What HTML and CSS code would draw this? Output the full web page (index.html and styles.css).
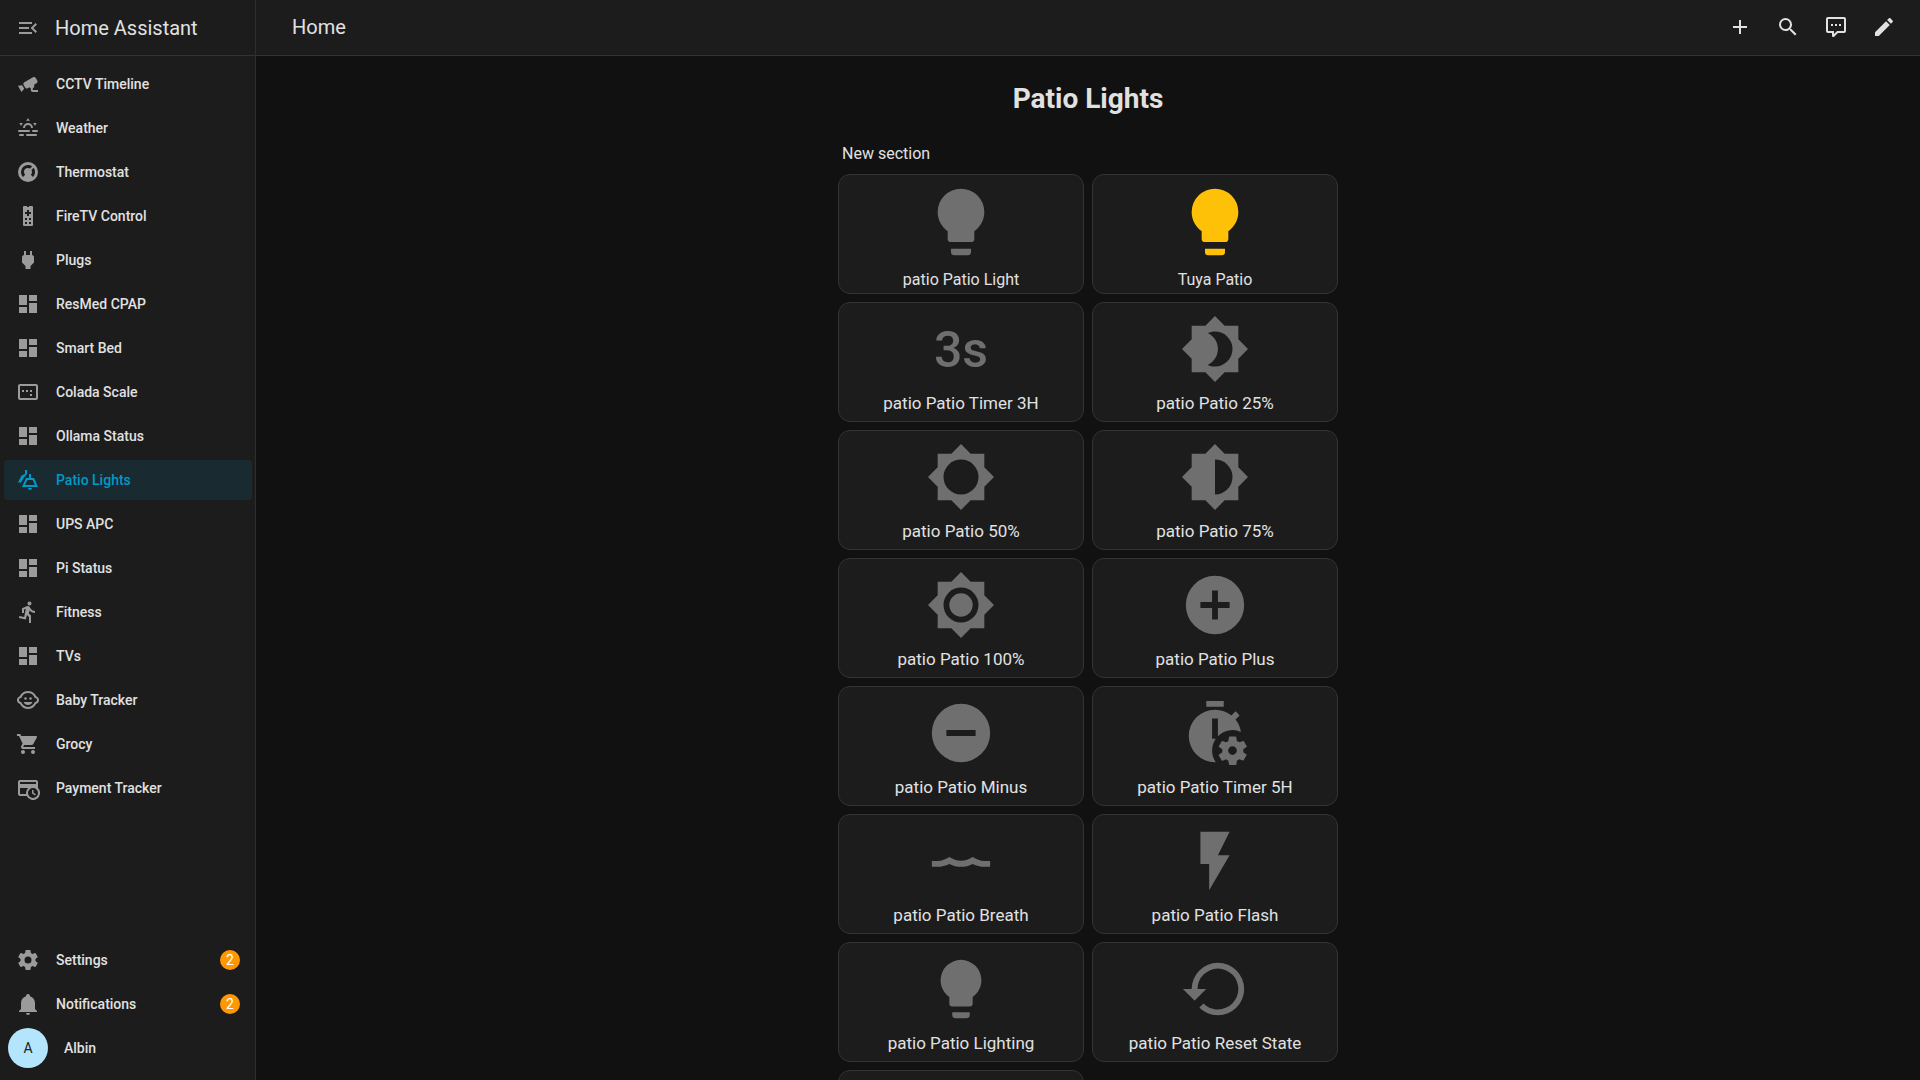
FILE: index.html
```html
<!DOCTYPE html>
<html lang="en">
<head>
    <meta charset="UTF-8">
    <meta name="viewport" content="width=device-width, initial-scale=1.0">
    <title>Home Assistant</title>
    <link rel="stylesheet" href="styles.css">
</head>
<body>

<!-- icons -->
<svg class="sprite" aria-hidden="true">
    <symbol id="i-menu" viewBox="0 0 24 24"><path d="M21,15.61L19.59,17L14.58,12L19.59,7L21,8.39L17.44,12L21,15.61M3,6H16V8H3V6M3,13V11H13V13H3M3,18V16H16V18H3Z"/></symbol>
    <symbol id="i-cctv" viewBox="0 0 24 24"><path d="M18.15,4.94C17.77,4.91 17.37,5 17,5.2L8.35,10.2C7.39,10.76 7.07,12 7.62,12.94L9.12,15.53C9.67,16.5 10.89,16.82 11.85,16.27L13.65,15.23C13.92,15.69 14.32,16.06 14.81,16.27V18.04C14.81,19.13 15.7,20 16.81,20H22V18.04H16.81V16.27C17.72,15.87 18.31,14.97 18.31,14C18.31,13.54 18.19,13.11 17.97,12.73L20.5,11.27C21.47,10.71 21.8,9.5 21.24,8.53L19.74,5.94C19.4,5.34 18.79,5 18.15,4.94M6.22,13.17L2,13.87L2.75,15.17L4.75,18.63L5.5,19.93L8.22,16.63L6.22,13.17Z"/></symbol>
    <symbol id="i-hazy" viewBox="0 0 24 24"><path d="M12,2L13.8,5.1A7,7 0 0,0 10.2,5.1L12,2M3.3,7L6.9,7A7,7 0 0,0 5.1,10.1L3.3,7M20.7,7L18.9,10.1A7,7 0 0,0 17.1,7L20.7,7M12,7A5,5 0 0,1 17,12H15A3,3 0 0,0 9,12H7A5,5 0 0,1 12,7M3,14H13A1,1 0 0,1 13,16H3A1,1 0 0,1 3,14M17,14H21A1,1 0 0,1 21,16H17A1,1 0 0,1 17,14M4,18H7A1,1 0 0,1 7,20H4A1,1 0 0,1 4,18M11,18H20A1,1 0 0,1 20,20H11A1,1 0 0,1 11,18Z"/></symbol>
    <symbol id="i-thermostat" viewBox="0 0 24 24"><path d="M16.95,16.95L14.83,14.83C15.55,14.1 16,13.1 16,12C16,11.26 15.79,10.57 15.43,10L17.6,7.81C18.5,9 19,10.43 19,12C19,13.93 18.22,15.68 16.95,16.95M12,5C13.57,5 15,5.5 16.19,6.4L14,8.56C13.43,8.21 12.74,8 12,8A4,4 0 0,0 8,12C8,13.1 8.45,14.1 9.17,14.83L7.05,16.95C5.78,15.68 5,13.93 5,12A7,7 0 0,1 12,5M12,2A10,10 0 0,0 2,12A10,10 0 0,0 12,22A10,10 0 0,0 22,12A10,10 0 0,0 12,2Z"/></symbol>
    <symbol id="i-remote" viewBox="0 0 24 24"><path fill-rule="evenodd" d="M8,2H11V3H13V2H16A1,1 0 0,1 17,3V21A1,1 0 0,1 16,22H8A1,1 0 0,1 7,21V3A1,1 0 0,1 8,2M11,6V8H9V10H11V12H13V10H15V8H13V6H11M9,14V16H11V14H9M13,14V16H15V14H13M9,18V20H11V18H9M13,18V20H15V18H13Z"/></symbol>
    <symbol id="i-plug" viewBox="0 0 24 24"><path d="M16,7V3H14V7H10V3H8V7H8C7,7 6,8 6,9V14.5L9.5,18V21H14.5V18L18,14.5V9C18,8 17,7 16,7Z"/></symbol>
    <symbol id="i-dashboard" viewBox="0 0 24 24"><path d="M13,3V9H21V3M13,21H21V11H13M3,21H11V15H3M3,13H11V3H3V13Z"/></symbol>
    <symbol id="i-ratio" viewBox="0 0 24 24"><path d="M16,10H14V12H16V10M16,14H14V16H16V14M8,10H6V12H8V10M12,10H10V12H12V10M20,4H4A2,2 0 0,0 2,6V18A2,2 0 0,0 4,20H20A2,2 0 0,0 22,18V6A2,2 0 0,0 20,4M20,18H4V6H20V18Z"/></symbol>
    <symbol id="i-lamps" viewBox="0 0 24 24"><path fill-rule="evenodd" d="M9,2H11V6L8,9.5L5,14.5H2L5.5,7.5L9,6V2M13,6H15V10H18L22,19H6L10,10H13V6M11.3,12L9.1,17H18.9L16.7,12H11.3M12,20H16A2,2 0 0,1 12,20Z"/></symbol>
    <symbol id="i-run" viewBox="0 0 24 24"><path d="M13.5,5.5C14.59,5.5 15.5,4.58 15.5,3.5C15.5,2.38 14.59,1.5 13.5,1.5C12.39,1.5 11.5,2.38 11.5,3.5C11.5,4.58 12.39,5.5 13.5,5.5M9.89,19.38L10.89,15L13,17V23H15V15.5L12.89,13.5L13.5,10.5C14.79,12 16.79,13 19,13V11C17.09,11 15.5,10 14.69,8.58L13.69,7C13.29,6.38 12.69,6 12,6C11.69,6 11.5,6.08 11.19,6.08L6,8.28V13H8V9.58L9.79,8.88L8.19,17L3.29,16L2.89,18L9.89,19.38Z"/></symbol>
    <symbol id="i-baby" viewBox="0 0 24 24"><circle cx="14.5" cy="10.5" r="1.25"/><circle cx="9.5" cy="10.5" r="1.25"/><path d="M22.94 12.66c.04-.21.06-.43.06-.66s-.02-.45-.06-.66c-.25-1.51-1.36-2.74-2.81-3.17-.53-1.12-1.28-2.1-2.19-2.91C16.36 3.85 14.28 3 12 3s-4.36.85-5.94 2.26c-.92.81-1.67 1.8-2.19 2.91-1.45.43-2.56 1.65-2.81 3.17-.04.21-.06.43-.06.66s.02.45.06.66c.25 1.51 1.36 2.74 2.81 3.17.52 1.11 1.27 2.09 2.17 2.89C7.62 20.14 9.71 21 12 21s4.38-.86 5.97-2.28c.9-.8 1.65-1.79 2.17-2.89 1.44-.43 2.55-1.65 2.8-3.17zM19 14c-.1 0-.19-.02-.29-.03-.2.67-.49 1.29-.86 1.86C16.6 17.74 14.45 19 12 19s-4.6-1.26-5.85-3.17c-.37-.57-.66-1.19-.86-1.86-.1.01-.19.03-.29.03-1.1 0-2-.9-2-2s.9-2 2-2c.1 0 .19.02.29.03.2-.67.49-1.29.86-1.86C7.4 6.26 9.55 5 12 5s4.6 1.26 5.85 3.17c.37.57.66 1.19.86 1.86.1-.01.19-.03.29-.03 1.1 0 2 .9 2 2s-.9 2-2 2zM7.5 14c.76 1.77 2.49 3 4.5 3s3.74-1.23 4.5-3h-9z"/></symbol>
    <symbol id="i-cart" viewBox="0 0 24 24"><path d="M17,18C15.89,18 15,18.89 15,20A2,2 0 0,0 17,22A2,2 0 0,0 19,20C19,18.89 18.1,18 17,18M1,2V4H3L6.6,11.59L5.24,14.04C5.09,14.32 5,14.65 5,15A2,2 0 0,0 7,17H19V15H7.42A0.25,0.25 0 0,1 7.17,14.75C7.17,14.7 7.18,14.66 7.2,14.63L8.1,13H15.55C16.3,13 16.96,12.58 17.3,11.97L20.88,5.5C20.95,5.34 21,5.17 21,5A1,1 0 0,0 20,4H5.21L4.27,2M7,18C5.89,18 5,18.89 5,20A2,2 0 0,0 7,22A2,2 0 0,0 9,20C9,18.89 8.1,18 7,18Z"/></symbol>
    <symbol id="i-card" viewBox="0 0 24 24"><path fill-rule="evenodd" d="M4,4H20A2,2 0 0,1 22,6V12.1A7,7 0 1,1 10.7,20H4A2,2 0 0,1 2,18V6A2,2 0 0,1 4,4M4,6V8H20V6H4M4,12V18H10.1A7,7 0 0,1 12.1,12H4M17,12A5,5 0 0,0 17,22A5,5 0 0,0 17,12M16,14H17.5V16.8L19.9,18.2L19.2,19.5L16,17.6V14Z"/></symbol>
    <symbol id="i-cog" viewBox="0 0 24 24"><path d="M12,15.5A3.5,3.5 0 0,1 8.5,12A3.5,3.5 0 0,1 12,8.5A3.5,3.5 0 0,1 15.5,12A3.5,3.5 0 0,1 12,15.5M19.43,12.97C19.47,12.65 19.5,12.33 19.5,12C19.5,11.67 19.47,11.34 19.43,11L21.54,9.37C21.73,9.22 21.78,8.95 21.66,8.73L19.66,5.27C19.54,5.05 19.27,4.96 19.05,5.05L16.56,6.05C16.04,5.66 15.5,5.32 14.87,5.07L14.5,2.42C14.46,2.18 14.25,2 14,2H10C9.75,2 9.54,2.18 9.5,2.42L9.13,5.07C8.5,5.32 7.96,5.66 7.44,6.05L4.95,5.05C4.73,4.96 4.46,5.05 4.34,5.27L2.34,8.73C2.21,8.95 2.27,9.22 2.46,9.37L4.57,11C4.53,11.34 4.5,11.67 4.5,12C4.5,12.33 4.53,12.65 4.57,12.97L2.46,14.63C2.27,14.78 2.21,15.05 2.34,15.27L4.34,18.73C4.46,18.95 4.73,19.03 4.95,18.95L7.44,17.94C7.96,18.34 8.5,18.68 9.13,18.93L9.5,21.58C9.54,21.82 9.75,22 10,22H14C14.25,22 14.46,21.82 14.5,21.58L14.87,18.93C15.5,18.67 16.04,18.34 16.56,17.94L19.05,18.95C19.27,19.03 19.54,18.95 19.66,18.73L21.66,15.27C21.78,15.05 21.73,14.78 21.54,14.63L19.43,12.97Z"/></symbol>
    <symbol id="i-bell" viewBox="0 0 24 24"><path d="M21,19V20H3V19L5,17V11C5,7.9 7.03,5.17 10,4.29C10,4.19 10,4.1 10,4A2,2 0 0,1 12,2A2,2 0 0,1 14,4C14,4.1 14,4.19 14,4.29C16.97,5.17 19,7.9 19,11V17L21,19M14,21A2,2 0 0,1 12,23A2,2 0 0,1 10,21"/></symbol>
    <symbol id="i-plus" viewBox="0 0 24 24"><path d="M19,13H13V19H11V13H5V11H11V5H13V11H19V13Z"/></symbol>
    <symbol id="i-search" viewBox="0 0 24 24"><path d="M9.5,3A6.5,6.5 0 0,1 16,9.5C16,11.11 15.41,12.59 14.44,13.73L14.71,14H15.5L20.5,19L19,20.5L14,15.5V14.71L13.73,14.44C12.59,15.41 11.11,16 9.5,16A6.5,6.5 0 0,1 3,9.5A6.5,6.5 0 0,1 9.5,3M9.5,5C7,5 5,7 5,9.5C5,12 7,14 9.5,14C12,14 14,12 14,9.5C14,7 12,5 9.5,5Z"/></symbol>
    <symbol id="i-comment" viewBox="0 0 24 24"><path d="M9,22A1,1 0 0,1 8,21V18H4A2,2 0 0,1 2,16V4C2,2.89 2.9,2 4,2H20A2,2 0 0,1 22,4V16A2,2 0 0,1 20,18H13.9L10.2,21.71C10,21.9 9.75,22 9.5,22V22H9M10,16V19.08L13.08,16H20V4H4V16H10M17,11H15V9H17V11M13,11H11V9H13V11M9,11H7V9H9V11Z"/></symbol>
    <symbol id="i-pencil" viewBox="0 0 24 24"><path d="M20.71,7.04C21.1,6.65 21.1,6 20.71,5.63L18.37,3.29C18,2.9 17.35,2.9 16.96,3.29L15.12,5.12L18.87,8.87M3,17.25V21H6.75L17.81,9.93L14.06,6.18L3,17.25Z"/></symbol>
    <symbol id="i-bulb" viewBox="0 0 24 24"><path d="M12,2A7,7 0 0,0 5,9C5,11.38 6.19,13.47 8,14.74V17A1,1 0 0,0 9,18H15A1,1 0 0,0 16,17V14.74C17.81,13.47 19,11.38 19,9A7,7 0 0,0 12,2M9,21A1,1 0 0,0 10,22H14A1,1 0 0,0 15,21V20H9V21Z"/></symbol>
    <symbol id="i-bright25" viewBox="0 0 24 24"><path fill-rule="evenodd" d="M20,8.69V4H15.31L12,0.69L8.69,4H4V8.69L0.69,12L4,15.31V20H8.69L12,23.31L15.31,20H20V15.31L23.31,12L20,8.69M12,18C11.11,18 10.26,17.8 9.5,17.45C11.56,16.5 13,14.42 13,12C13,9.58 11.56,7.5 9.5,6.55C10.26,6.2 11.11,6 12,6A6,6 0 0,1 18,12A6,6 0 0,1 12,18Z"/></symbol>
    <symbol id="i-bright50" viewBox="0 0 24 24"><path fill-rule="evenodd" d="M20,8.69V4H15.31L12,0.69L8.69,4H4V8.69L0.69,12L4,15.31V20H8.69L12,23.31L15.31,20H20V15.31L23.31,12L20,8.69M12,18A6,6 0 0,1 12,6A6,6 0 0,1 12,18Z"/></symbol>
    <symbol id="i-bright75" viewBox="0 0 24 24"><path fill-rule="evenodd" d="M20,8.69V4H15.31L12,0.69L8.69,4H4V8.69L0.69,12L4,15.31V20H8.69L12,23.31L15.31,20H20V15.31L23.31,12L20,8.69M12,18V6A6,6 0 0,1 12,18Z"/></symbol>
    <symbol id="i-bright100" viewBox="0 0 24 24"><path fill-rule="evenodd" d="M20,8.69V4H15.31L12,0.69L8.69,4H4V8.69L0.69,12L4,15.31V20H8.69L12,23.31L15.31,20H20V15.31L23.31,12L20,8.69M12,18A6,6 0 0,1 12,6A6,6 0 0,1 12,18M12,8A4,4 0 0,0 12,16A4,4 0 0,0 12,8Z"/></symbol>
    <symbol id="i-plus-circle" viewBox="0 0 24 24"><path d="M17,13H13V17H11V13H7V11H11V7H13V11H17M12,2A10,10 0 0,0 2,12A10,10 0 0,0 12,22A10,10 0 0,0 22,12A10,10 0 0,0 12,2Z"/></symbol>
    <symbol id="i-minus-circle" viewBox="0 0 24 24"><path d="M17,13H7V11H17M12,2A10,10 0 0,0 2,12A10,10 0 0,0 12,22A10,10 0 0,0 22,12A10,10 0 0,0 12,2Z"/></symbol>
    <symbol id="i-timer-cog" viewBox="0 0 24 24"><path d="M9,1H15V3H9V1M19.03,7.39L20.45,5.97C20,5.46 19.55,5 19.04,4.56L17.62,6C16.07,4.74 14.12,4 12,4A9,9 0 0,0 12,22H12.26A7,7 0 0,1 12.26,14H11V7H13V13.1A7,7 0 0,1 20.88,11.62C20.7,10.03 20,8.6 19.03,7.39Z"/><path d="M21.7 18.6V17.6L22.8 16.8C22.9 16.7 23 16.6 22.9 16.5L21.9 14.8C21.9 14.7 21.7 14.7 21.6 14.7L20.4 15.2C20.1 15 19.8 14.8 19.5 14.7L19.3 13.4C19.3 13.3 19.2 13.2 19.1 13.2H17.1C16.9 13.2 16.8 13.3 16.8 13.4L16.6 14.7C16.3 14.9 16.1 15 15.8 15.2L14.6 14.7C14.5 14.7 14.4 14.7 14.3 14.8L13.3 16.5C13.3 16.6 13.3 16.7 13.4 16.8L14.5 17.6V18.6L13.4 19.4C13.3 19.5 13.2 19.6 13.3 19.7L14.3 21.4C14.4 21.5 14.5 21.5 14.6 21.5L15.8 21C16 21.2 16.3 21.4 16.6 21.5L16.8 22.8C16.9 22.9 17 23 17.1 23H19.1C19.2 23 19.3 22.9 19.3 22.8L19.5 21.5C19.8 21.3 20 21.2 20.3 21L21.5 21.4C21.6 21.4 21.7 21.4 21.8 21.3L22.8 19.6C22.9 19.5 22.9 19.4 22.8 19.4L21.7 18.6M18 19.5C17.2 19.5 16.5 18.8 16.5 18S17.2 16.5 18 16.5 19.5 17.2 19.5 18 18.8 19.5 18 19.5Z"/></symbol>
    <symbol id="i-wave" viewBox="0 0 24 24"><path d="M2,12H4C5.4,12 6.8,11.4 8,10.65C10.4,12.3 13.6,12.3 16,10.65C17.2,11.4 18.6,12 20,12H22V14H20C18.6,14 17.3,13.6 16,13C13.5,14.3 10.5,14.3 8,13C6.7,13.6 5.4,14 4,14H2V12Z"/></symbol>
    <symbol id="i-flash" viewBox="0 0 24 24"><path d="M7,2V13H10V22L17,10H13L17,2H7Z"/></symbol>
    <symbol id="i-restore" viewBox="0 0 24 24"><path d="M13,3A9,9 0 0,0 4,12H1L4.89,15.89L4.96,16.03L9,12H6A7,7 0 0,1 13,5A7,7 0 0,1 20,12A7,7 0 0,1 13,19C11.07,19 9.32,18.21 8.06,16.94L6.64,18.36C8.27,20 10.5,21 13,21A9,9 0 0,0 22,12A9,9 0 0,0 13,3"/></symbol>
</svg>

<div class="app">
    <aside class="sidebar">
        <div class="sidebar-header">
            <button class="icon-button" aria-label="Sidebar toggle"><svg class="icon"><use href="#i-menu"/></svg></button>
            <span class="brand">Home Assistant</span>
        </div>

        <nav class="nav">
            <a href="#"><svg class="icon"><use href="#i-cctv"/></svg>CCTV Timeline</a>
            <a href="#"><svg class="icon"><use href="#i-hazy"/></svg>Weather</a>
            <a href="#"><svg class="icon"><use href="#i-thermostat"/></svg>Thermostat</a>
            <a href="#"><svg class="icon"><use href="#i-remote"/></svg>FireTV Control</a>
            <a href="#"><svg class="icon"><use href="#i-plug"/></svg>Plugs</a>
            <a href="#"><svg class="icon"><use href="#i-dashboard"/></svg>ResMed CPAP</a>
            <a href="#"><svg class="icon"><use href="#i-dashboard"/></svg>Smart Bed</a>
            <a href="#"><svg class="icon"><use href="#i-ratio"/></svg>Colada Scale</a>
            <a href="#"><svg class="icon"><use href="#i-dashboard"/></svg>Ollama Status</a>
            <a href="#" class="active" aria-current="page"><svg class="icon"><use href="#i-lamps"/></svg>Patio Lights</a>
            <a href="#"><svg class="icon"><use href="#i-dashboard"/></svg>UPS APC</a>
            <a href="#"><svg class="icon"><use href="#i-dashboard"/></svg>Pi Status</a>
            <a href="#"><svg class="icon"><use href="#i-run"/></svg>Fitness</a>
            <a href="#"><svg class="icon"><use href="#i-dashboard"/></svg>TVs</a>
            <a href="#"><svg class="icon"><use href="#i-baby"/></svg>Baby Tracker</a>
            <a href="#"><svg class="icon"><use href="#i-cart"/></svg>Grocy</a>
            <a href="#"><svg class="icon"><use href="#i-card"/></svg>Payment Tracker</a>
        </nav>

        <nav class="nav nav-bottom">
            <a href="#"><svg class="icon"><use href="#i-cog"/></svg>Settings<span class="badge">2</span></a>
            <a href="#"><svg class="icon"><use href="#i-bell"/></svg>Notifications<span class="badge">2</span></a>
            <a href="#" class="profile"><span class="avatar">A</span>Albin</a>
        </nav>
    </aside>

    <main class="main">
        <header class="toolbar">
            <span class="toolbar-title">Home</span>
            <button class="icon-button" aria-label="Add"><svg class="icon"><use href="#i-plus"/></svg></button>
            <button class="icon-button" aria-label="Search"><svg class="icon"><use href="#i-search"/></svg></button>
            <button class="icon-button" aria-label="Assist"><svg class="icon"><use href="#i-comment"/></svg></button>
            <button class="icon-button" aria-label="Edit"><svg class="icon"><use href="#i-pencil"/></svg></button>
        </header>

        <div class="view">
            <h1>Patio Lights</h1>
            <section class="section">
                <h2>New section</h2>
                <div class="cards">
                    <button class="card light"><svg class="card-icon"><use href="#i-bulb"/></svg><span class="name">patio Patio Light</span></button>
                    <button class="card light on"><svg class="card-icon"><use href="#i-bulb"/></svg><span class="name">Tuya Patio</span></button>
                    <button class="card"><span class="card-icon card-text">3s</span><span class="name">patio Patio Timer 3H</span></button>
                    <button class="card"><svg class="card-icon"><use href="#i-bright25"/></svg><span class="name">patio Patio 25%</span></button>
                    <button class="card"><svg class="card-icon"><use href="#i-bright50"/></svg><span class="name">patio Patio 50%</span></button>
                    <button class="card"><svg class="card-icon"><use href="#i-bright75"/></svg><span class="name">patio Patio 75%</span></button>
                    <button class="card"><svg class="card-icon"><use href="#i-bright100"/></svg><span class="name">patio Patio 100%</span></button>
                    <button class="card"><svg class="card-icon"><use href="#i-plus-circle"/></svg><span class="name">patio Patio Plus</span></button>
                    <button class="card"><svg class="card-icon"><use href="#i-minus-circle"/></svg><span class="name">patio Patio Minus</span></button>
                    <button class="card"><svg class="card-icon"><use href="#i-timer-cog"/></svg><span class="name">patio Patio Timer 5H</span></button>
                    <button class="card"><svg class="card-icon"><use href="#i-wave"/></svg><span class="name">patio Patio Breath</span></button>
                    <button class="card"><svg class="card-icon"><use href="#i-flash"/></svg><span class="name">patio Patio Flash</span></button>
                    <button class="card"><svg class="card-icon"><use href="#i-bulb"/></svg><span class="name">patio Patio Lighting</span></button>
                    <button class="card"><svg class="card-icon"><use href="#i-restore"/></svg><span class="name">patio Patio Reset State</span></button>
                    <button class="card"></button>
                </div>
            </section>
        </div>
    </main>
</div>

</body>
</html>
```
FILE: styles.css
```css
* {
    box-sizing: border-box;
}
body {
    margin: 0;
    font-family: Roboto, 'Noto Sans', sans-serif;
    font-size: 14px;
    color: #e1e1e1;
    background-color: #111111;
}
button {
    font: inherit;
    color: inherit;
    cursor: pointer;
}
.sprite {
    display: none;
}
.app {
    display: flex;
    height: 100vh;
}
.icon {
    width: 24px;
    height: 24px;
    fill: currentColor;
    flex: none;
}
.icon-button {
    display: flex;
    align-items: center;
    justify-content: center;
    width: 48px;
    height: 48px;
    padding: 0;
    border: none;
    background: none;
}

/* sidebar */
.sidebar {
    display: flex;
    flex-direction: column;
    flex: none;
    width: 256px;
    background-color: #1c1c1c;
    border-right: 1px solid #2e2e2e;
}
.sidebar-header {
    display: flex;
    align-items: center;
    height: 56px;
    padding: 0 4px;
    border-bottom: 1px solid #333333;
}
.sidebar-header .icon-button {
    color: #9b9b9b;
}
.brand {
    margin-left: 3px;
    font-size: 20px;
}
.nav {
    display: flex;
    flex-direction: column;
    gap: 4px;
    padding: 8px 3px 8px 4px;
}
.nav a {
    display: flex;
    align-items: center;
    gap: 16px;
    height: 40px;
    padding: 0 12px;
    border-radius: 4px;
    font-weight: 500;
    color: #e1e1e1;
    text-decoration: none;
}
.nav a .icon {
    color: #9b9b9b;
}
.nav a.active {
    color: #009ac7;
    background-color: #1a2a31;
}
.nav a.active .icon {
    color: #009ac7;
}
.nav-bottom {
    margin-top: auto;
    padding-bottom: 12px;
}
.badge {
    width: 20px;
    height: 20px;
    margin-left: auto;
    border-radius: 10px;
    background-color: #ff9800;
    color: #ffffff;
    font-weight: 400;
    line-height: 20px;
    text-align: center;
}
.nav a.profile {
    padding: 0 4px;
}
.avatar {
    width: 40px;
    height: 40px;
    border-radius: 50%;
    background-color: #b3e5fc;
    color: #212121;
    font-weight: 400;
    line-height: 40px;
    text-align: center;
}

/* dashboard */
.main {
    flex: 1;
    overflow-y: auto;
    scrollbar-width: none;
}
.toolbar {
    display: flex;
    align-items: center;
    height: 56px;
    padding: 0 12px 1px 36px;
    background-color: #1c1c1c;
    border-bottom: 1px solid #333333;
}
.toolbar-title {
    flex: 1;
    font-size: 20px;
}
.view {
    padding: 24px 16px;
}
h1 {
    margin: 0;
    font-size: 28px;
    line-height: 38px;
    text-align: center;
}
.section {
    max-width: 500px;
    margin: 22px auto 0;
}
h2 {
    margin: 0;
    padding: 4px;
    font-size: 16px;
    font-weight: 400;
    line-height: 20px;
}
.cards {
    display: grid;
    grid-template-columns: 1fr 1fr;
    gap: 8px;
    margin-top: 6px;
}
.card {
    display: flex;
    flex-direction: column;
    align-items: center;
    justify-content: center;
    min-height: 120px;
    padding: 3px 0 0;
    border: 1px solid #333333;
    border-radius: 12px;
    background-color: #1c1c1c;
}
.card-icon {
    width: 70px;
    height: 70px;
    fill: currentColor;
    color: #6f6f6f;
}
.card.light .card-icon {
    width: 80px;
    height: 80px;
}
.card.on .card-icon {
    color: #ffc107;
}
.card-text {
    font-size: 50px;
    font-weight: 500;
    line-height: 72px;
}
.name {
    margin-top: 9px;
    font-size: 17px;
    line-height: 20px;
}
.card.light .name {
    margin-top: 8px;
    font-size: 16px;
}
```
